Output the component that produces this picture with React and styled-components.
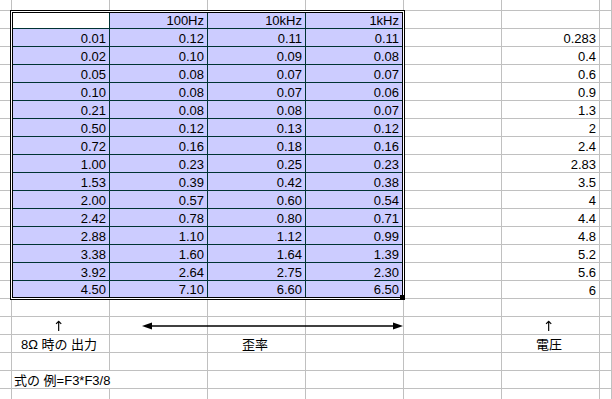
import React from 'react';
import styled, { createGlobalStyle } from 'styled-components';

const GlobalStyle = createGlobalStyle`
  html, body {
    margin: 0;
    padding: 0;
    background: #fff;
    overflow: hidden;
  }
  body {
    font-family: 'Liberation Sans', 'Noto Sans CJK JP', sans-serif;
    font-size: 13px;
    color: #000;
  }
`;

const Sheet = styled.div`
  display: grid;
  grid-template-columns: 12px repeat(6, 98px) 1fr;
  grid-template-rows: 11px repeat(22, 18px);
  width: 612px;
  height: 399px;
  overflow: hidden;
`;

const Cell = styled.div`
  position: relative;
  box-sizing: border-box;
  border-right: 1px solid #c0c0c0;
  border-bottom: 1px solid #c0c0c0;
  display: flex;
  align-items: flex-end;
  justify-content: ${(p) => (p.$align === 'center' ? 'center' : p.$align === 'left' ? 'flex-start' : 'flex-end')};
  padding: 0 ${(p) => (p.$align === 'left' ? '0 0 2px' : '3px 0 0')};
  line-height: 14px;
  white-space: nowrap;
  grid-column: span ${(p) => p.$span || 1};
  min-width: 0;
`;

const Block = styled.div`
  position: relative;
  grid-column: 2 / span 4;
  grid-row: 2 / span 16;
  margin: -1px -1px -1px -2px;
  border: 3px double #000;
  background: #fff;
  z-index: 1;
`;

const BlockGrid = styled.div`
  display: grid;
  grid-template-columns: 96px 97px 97px 96px;
  grid-template-rows: 15px repeat(14, 17px) 16px;
  gap: 1px;
  background: #003333;
  height: 100%;
`;

const DataCell = styled.div`
  background: ${(p) => (p.$blank ? '#fff' : '#ccccff')};
  display: flex;
  align-items: flex-end;
  justify-content: flex-end;
  padding-right: 3px;
  line-height: 14px;
`;

const FillHandle = styled.div`
  position: absolute;
  right: -2px;
  bottom: -2px;
  width: 4px;
  height: 4px;
  background: #000;
`;

const ArrowSvg = styled.svg`
  position: absolute;
  left: 32px;
  top: 4px;
  overflow: visible;
  z-index: 2;
`;

const Mark = styled.span`
  display: inline-block;
  font-family: 'DejaVu Sans', sans-serif;
  font-size: 14px;
  line-height: 16px;
  color: #000;
  will-change: transform;
  -webkit-font-smoothing: antialiased;
`;

const rowsB = ['0.01', '0.02', '0.05', '0.10', '0.21', '0.50', '0.72', '1.00', '1.53', '2.00', '2.42', '2.88', '3.38', '3.92', '4.50'];
const rowsC = ['0.12', '0.10', '0.08', '0.08', '0.08', '0.12', '0.16', '0.23', '0.39', '0.57', '0.78', '1.10', '1.60', '2.64', '7.10'];
const rowsD = ['0.11', '0.09', '0.07', '0.07', '0.08', '0.13', '0.18', '0.25', '0.42', '0.60', '0.80', '1.12', '1.64', '2.75', '6.60'];
const rowsE = ['0.11', '0.08', '0.07', '0.06', '0.07', '0.12', '0.16', '0.23', '0.38', '0.54', '0.71', '0.99', '1.39', '2.30', '6.50'];
const voltage = ['0.283', '0.4', '0.6', '0.9', '1.3', '2', '2.4', '2.83', '3.5', '4', '4.4', '4.8', '5.2', '5.6', '6'];

const Arrow = () => (
  <ArrowSvg width="262" height="10" viewBox="0 0 262 10">
    <line x1="8" y1="5" x2="254" y2="5" stroke="#000" strokeWidth="1.6" />
    <polygon points="0,5 10,1.5 10,8.5" fill="#000" />
    <polygon points="261,5 251,1.5 251,8.5" fill="#000" />
  </ArrowSvg>
);

const emptyRow = (r) => Array.from({ length: 8 }, (_, c) => <Cell key={`${r}-${c}`} />);

export default function App() {
  const cells = [];

  cells.push(...emptyRow(0));

  for (let r = 1; r <= 16; r++) {
    cells.push(<Cell key={`${r}-a`} />);
    cells.push(<Cell key={`${r}-f`} />);
    cells.push(<Cell key={`${r}-g`}>{r >= 2 ? voltage[r - 2] : ''}</Cell>);
    cells.push(<Cell key={`${r}-h`} />);
  }

  cells.push(...emptyRow(17));

  cells.push(
    <Cell key="18-a" />,
    <Cell key="18-b" $align="center"><Mark>↑</Mark></Cell>,
    <Cell key="18-c"><Arrow /></Cell>,
    <Cell key="18-d" />,
    <Cell key="18-e" />,
    <Cell key="18-f" />,
    <Cell key="18-g" $align="center"><Mark>↑</Mark></Cell>,
    <Cell key="18-h" />
  );

  cells.push(
    <Cell key="19-a" />,
    <Cell key="19-b" $align="center">8Ω 時の 出力</Cell>,
    <Cell key="19-c" />,
    <Cell key="19-d" $align="center">歪率</Cell>,
    <Cell key="19-e" />,
    <Cell key="19-f" />,
    <Cell key="19-g" $align="center">電圧</Cell>,
    <Cell key="19-h" />
  );

  cells.push(...emptyRow(20));

  cells.push(
    <Cell key="21-a" />,
    <Cell key="21-b" $align="left" $span={2}>式の 例=F3*F3/8</Cell>,
    <Cell key="21-d" />,
    <Cell key="21-e" />,
    <Cell key="21-f" />,
    <Cell key="21-g" />,
    <Cell key="21-h" />
  );

  cells.push(...emptyRow(22));

  return (
    <>
      <GlobalStyle />
      <Sheet>
        <Block>
          <BlockGrid>
            <DataCell $blank />
            <DataCell>100Hz</DataCell>
            <DataCell>10kHz</DataCell>
            <DataCell>1kHz</DataCell>
            {rowsB.map((v, i) => (
              <React.Fragment key={i}>
                <DataCell>{v}</DataCell>
                <DataCell>{rowsC[i]}</DataCell>
                <DataCell>{rowsD[i]}</DataCell>
                <DataCell>{rowsE[i]}</DataCell>
              </React.Fragment>
            ))}
          </BlockGrid>
          <FillHandle />
        </Block>
        {cells}
      </Sheet>
    </>
  );
}
